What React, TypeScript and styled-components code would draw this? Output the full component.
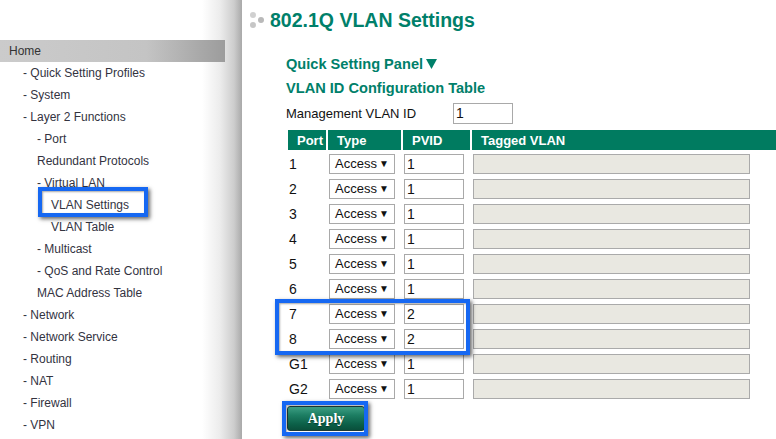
import React from 'react';
import styled, { createGlobalStyle } from 'styled-components';

const GlobalStyle = createGlobalStyle`
  html, body {
    margin: 0;
    padding: 0;
    background: #fff;
    overflow: hidden;
  }
  body {
    font-family: 'Liberation Sans', Arial, sans-serif;
  }
`;

const Page = styled.div`
  position: relative;
  display: flex;
  width: 776px;
  height: 439px;
  overflow: hidden;
`;

const Sidebar = styled.nav`
  flex: 0 0 242px;
  padding-top: 40px;
  background: linear-gradient(
    to right,
    #fff 0,
    #fff 202px,
    #ececec 220px,
    #cdcdcd 234px,
    #a9a9a9 242px
  );
`;

const HomeBar = styled.div`
  width: 216px;
  height: 22px;
  line-height: 22px;
  padding-left: 9px;
  font-size: 12px;
  color: #333;
  background: linear-gradient(to right, #cbcbcb 0, #c4c4c4 65%, #9c9c9c 100%);
`;

const MenuItem = styled.div<{ $level: number }>`
  height: 22px;
  line-height: 22px;
  font-size: 12px;
  color: #33333f;
  padding-left: ${(p) => 23 + p.$level * 14}px;
  white-space: nowrap;
`;

const Main = styled.main`
  flex: 1;
  min-width: 0;
  overflow: hidden;
  padding-left: 7px;
`;

const TitleRow = styled.div`
  display: flex;
  align-items: center;
  height: 40px;
  gap: 3px;
`;

const Title = styled.h1`
  margin: 0;
  font-size: 19.5px;
  font-weight: bold;
  color: #00806a;
`;

const Content = styled.section`
  padding-left: 37px;
  padding-top: 12px;
`;

const SubTitle = styled.h2`
  display: flex;
  align-items: center;
  margin: 0;
  height: 24px;
  line-height: 24px;
  font-size: 14.6px;
  font-weight: bold;
  color: #00806a;
  white-space: nowrap;
`;

const Caret = styled.svg`
  margin-left: 3px;
  margin-top: -1px;
`;

const FieldRow = styled.div`
  display: flex;
  align-items: center;
  height: 24px;
  margin-top: 1px;
  font-size: 13px;
  color: #111;
`;

const FieldLabel = styled.span`
  width: 166px;
`;

const TextBox = styled.input<{ $w: number }>`
  box-sizing: border-box;
  width: ${(p) => p.$w}px;
  height: 20px;
  margin: 0 0 0 1px;
  padding: 0 2px;
  border: 1px solid #a9a9a9;
  background: #fff;
  font-family: 'Liberation Sans', Arial, sans-serif;
  font-size: 14px;
  color: #111;
  outline: none;
  display: block;
`;

const ReadOnlyBox = styled.div`
  box-sizing: border-box;
  width: 277px;
  height: 20px;
  margin-left: 1px;
  border: 1px solid #aaa;
  background: #e9e8e1;
`;

const Table = styled.table`
  margin-top: 3px;
  border-collapse: separate;
  border-spacing: 2px;
  table-layout: fixed;
  width: 497px;
`;

const HeadCell = styled.th<{ $w: number }>`
  width: ${(p) => p.$w}px;
  height: 20px;
  padding: 0 0 0 9px;
  background: #007b60;
  color: #fff;
  font-size: 13px;
  font-weight: bold;
  text-align: left;
  white-space: nowrap;
  overflow: hidden;
  box-sizing: border-box;
`;

const Cell = styled.td`
  height: 23px;
  padding: 0;
  font-size: 14px;
  color: #111;
  vertical-align: middle;
`;

const PortCell = styled(Cell)`
  padding-left: 1px;
`;

const SelectBox = styled.div`
  box-sizing: border-box;
  display: flex;
  align-items: center;
  justify-content: space-between;
  width: 66px;
  height: 20px;
  margin-left: 1px;
  padding: 0 5px 0 5px;
  border: 1px solid #a9a9a9;
  background: #fff;
  font-size: 13px;
  color: #111;
`;

const Arrow = styled.span`
  font-size: 10px;
  color: #111;
`;

const ApplyButton = styled.button`
  display: block;
  box-sizing: border-box;
  width: 78px;
  height: 25px;
  margin: 4px 0 0 1px;
  border: 1px solid #1e3a33;
  border-radius: 3px;
  background: linear-gradient(to bottom, #3d9f84 0, #1d7e63 35%, #0c6048 75%, #0a4f3b 100%);
  color: #fff;
  font-family: 'Liberation Serif', 'Times New Roman', serif;
  font-size: 14px;
  font-weight: bold;
  text-shadow: 0 1px 1px rgba(0, 0, 0, 0.4);
`;

const Highlight = styled.div<{ $x: number; $y: number; $w: number; $h: number }>`
  position: absolute;
  left: ${(p) => p.$x}px;
  top: ${(p) => p.$y}px;
  width: ${(p) => p.$w}px;
  height: ${(p) => p.$h}px;
  box-sizing: border-box;
  border: 4px solid #1668f2;
  box-shadow: 2px 2px 4px rgba(0, 0, 0, 0.6), inset 1px 1px 2px rgba(0, 0, 0, 0.35);
  pointer-events: none;
`;

const menu: Array<[string, number]> = [
  ['- Quick Setting Profiles', 0],
  ['- System', 0],
  ['- Layer 2 Functions', 0],
  ['- Port', 1],
  ['Redundant Protocols', 1],
  ['- Virtual LAN', 1],
  ['VLAN Settings', 2],
  ['VLAN Table', 2],
  ['- Multicast', 1],
  ['- QoS and Rate Control', 1],
  ['MAC Address Table', 1],
  ['- Network', 0],
  ['- Network Service', 0],
  ['- Routing', 0],
  ['- NAT', 0],
  ['- Firewall', 0],
  ['- VPN', 0],
];

const ports: Array<[string, string]> = [
  ['1', '1'],
  ['2', '1'],
  ['3', '1'],
  ['4', '1'],
  ['5', '1'],
  ['6', '1'],
  ['7', '2'],
  ['8', '2'],
  ['G1', '1'],
  ['G2', '1'],
];

const TitleDots = () => (
  <svg width="18" height="24" viewBox="0 0 18 24">
    <circle cx="4" cy="7" r="3" fill="#d0d0d0" />
    <circle cx="4" cy="17" r="3" fill="#c6c6c6" />
    <circle cx="12" cy="12" r="3" fill="#b9b9b9" />
  </svg>
);

const App = () => (
  <>
    <GlobalStyle />
    <Page>
      <Sidebar>
        <HomeBar>Home</HomeBar>
        {menu.map(([label, level]) => (
          <MenuItem key={label} $level={level}>
            {label}
          </MenuItem>
        ))}
      </Sidebar>
      <Main>
        <TitleRow>
          <TitleDots />
          <Title>802.1Q VLAN Settings</Title>
        </TitleRow>
        <Content>
          <SubTitle>
            Quick Setting Panel
            <Caret width="11" height="10" viewBox="0 0 11 10">
              <path d="M0 0 H11 L5.5 10 Z" fill="#00806a" />
            </Caret>
          </SubTitle>
          <SubTitle>VLAN ID Configuration Table</SubTitle>
          <FieldRow>
            <FieldLabel>Management VLAN ID</FieldLabel>
            <TextBox $w={60} value="1" readOnly style={{ height: 21 }} />
          </FieldRow>
          <Table>
            <thead>
              <tr>
                <HeadCell $w={38}>Port</HeadCell>
                <HeadCell $w={73}>Type</HeadCell>
                <HeadCell $w={67}>PVID</HeadCell>
                <HeadCell $w={311}>Tagged VLAN</HeadCell>
              </tr>
            </thead>
            <tbody>
              {ports.map(([port, pvid]) => (
                <tr key={port}>
                  <PortCell>{port}</PortCell>
                  <Cell>
                    <SelectBox>
                      Access <Arrow>▼</Arrow>
                    </SelectBox>
                  </Cell>
                  <Cell>
                    <TextBox $w={60} value={pvid} readOnly />
                  </Cell>
                  <Cell>
                    <ReadOnlyBox />
                  </Cell>
                </tr>
              ))}
            </tbody>
          </Table>
          <ApplyButton>Apply</ApplyButton>
        </Content>
      </Main>
      <Highlight $x={38} $y={187} $w={110} $h={30} />
      <Highlight $x={275} $y={299} $w={195} $h={56} />
      <Highlight $x={282} $y={401} $w={86} $h={35} />
    </Page>
  </>
);

export default App;
